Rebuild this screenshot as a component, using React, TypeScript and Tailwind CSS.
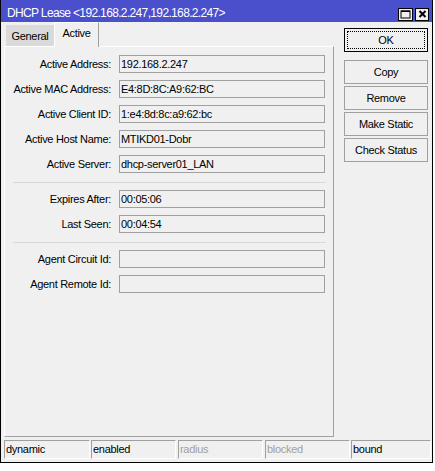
import React from "react";

function Row({ label, value }: { label: string; value: string }) {
  return (
    <div className="flex items-center h-[18px]">
      <div className="w-[106px] text-right whitespace-nowrap leading-[18px]">{label}</div>
      <div className="ml-[8px] w-[206px] h-[18px] border border-[#a0a0a0] bg-[#f0f0f0] pl-[1px] leading-[16px] whitespace-nowrap text-black">
        {value}
      </div>
    </div>
  );
}

function Sep() {
  return <div className="ml-[8px] w-[313px] h-px bg-[#d9d9d9] mt-[9px] mb-[7px]" />;
}

function Btn({ children }: { children: React.ReactNode }) {
  return (
    <div className="w-[84px] h-[24px] border border-[#a0a0a0] bg-[#f0f0f0] flex items-center justify-center leading-none">
      {children}
    </div>
  );
}

function Cell({ children, w, gray, ml }: { children: React.ReactNode; w: string; gray?: boolean; ml: string }) {
  return (
    <div
      className={
        "h-[19px] border-t border-l border-t-[#a0a0a0] border-l-[#a0a0a0] border-b border-r border-b-white border-r-white pl-[1px] leading-[17px] " +
        w +
        " " +
        ml +
        (gray ? " text-[#a0a0a0]" : " text-black")
      }
    >
      {children}
    </div>
  );
}

export default function App() {
  return (
    <div className="w-[435px] h-[471px] bg-white font-['Liberation_Sans',Arial,sans-serif] text-[11px] tracking-[-0.3px] text-black">
      <div className="w-[433px] h-[463px] bg-[#f0f0f0] border-l border-r border-b border-black flex flex-col">
        {/* Title bar */}
        <div className="h-[22px] bg-[#4a4fcb] flex items-center pl-[6px] pr-[3px] shrink-0">
          <div className="text-white text-[12px] tracking-[-0.65px] whitespace-nowrap pt-[4px]">
            DHCP Lease &lt;192.168.2.247,192.168.2.247&gt;
          </div>
          <div className="ml-auto flex gap-[2px] pt-[6px]">
            <div className="w-[15px] h-[13px] bg-[#f0f0f0] border border-black flex items-center justify-center">
              <svg width="11" height="9" viewBox="0 0 11 9">
                <rect x="1" y="1" width="9" height="7" fill="none" stroke="#000" strokeWidth="1" />
                <rect x="1" y="0.5" width="9" height="1.5" fill="#000" />
              </svg>
            </div>
            <div className="w-[14px] h-[13px] bg-[#f0f0f0] border border-black flex items-center justify-center">
              <svg width="9" height="8" viewBox="0 0 9 8">
                <path d="M1.5 1 L7.5 7 M7.5 1 L1.5 7" stroke="#000" strokeWidth="2" />
              </svg>
            </div>
          </div>
        </div>

        {/* Main */}
        <div className="flex flex-1">
          {/* Left column */}
          <div className="ml-[3px] w-[330px] flex flex-col">
            <div className="h-[24px] flex items-end">
              <div className="ml-[2px] w-[48px] h-[21px] bg-[#dadada] flex items-center justify-center leading-none pt-[1px]">
                General
              </div>
              <div className="relative z-10 -mb-px w-[45px] h-[25px] bg-[#f0f0f0] border-t border-l border-t-white border-l-white border-r border-r-[#a0a0a0] flex justify-center pt-[5px] leading-none">
                Active
              </div>
            </div>
            <div className="h-[391px] border-t border-l border-t-white border-l-white border-r border-b border-r-[#a0a0a0] border-b-[#a0a0a0] pt-[8px]">
              <div className="flex flex-col gap-[7px]">
                <Row label="Active Address:" value="192.168.2.247" />
                <Row label="Active MAC Address:" value="E4:8D:8C:A9:62:BC" />
                <Row label="Active Client ID:" value="1:e4:8d:8c:a9:62:bc" />
                <Row label="Active Host Name:" value="MTIKD01-Dobr" />
                <Row label="Active Server:" value="dhcp-server01_LAN" />
              </div>
              <Sep />
              <div className="flex flex-col gap-[7px]">
                <Row label="Expires After:" value="00:05:06" />
                <Row label="Last Seen:" value="00:04:54" />
              </div>
              <Sep />
              <div className="flex flex-col gap-[7px]">
                <Row label="Agent Circuit Id:" value="" />
                <Row label="Agent Remote Id:" value="" />
              </div>
            </div>
          </div>

          {/* Right column */}
          <div className="ml-[10px] pt-[6px] flex flex-col">
            <div className="relative w-[84px] h-[24px] border border-black bg-[#f0f0f0] flex items-center justify-center leading-none">
              <div className="absolute inset-[2px] border border-dotted border-black" />
              OK
            </div>
            <div className="mt-[8px] flex flex-col gap-[2px]">
              <Btn>Copy</Btn>
              <Btn>Remove</Btn>
              <Btn>Make Static</Btn>
              <Btn>Check Status</Btn>
            </div>
          </div>
        </div>

        {/* Status bar */}
        <div className="flex mt-[3px] mb-[3px] ml-[3px]">
          <Cell w="w-[86px]" ml="">dynamic</Cell>
          <Cell w="w-[85px]" ml="ml-[1px]">enabled</Cell>
          <Cell w="w-[85px]" ml="ml-[2px]" gray>radius</Cell>
          <Cell w="w-[85px]" ml="ml-[2px]" gray>blocked</Cell>
          <Cell w="w-[80px]" ml="ml-[1px]">bound</Cell>
        </div>
      </div>
    </div>
  );
}
